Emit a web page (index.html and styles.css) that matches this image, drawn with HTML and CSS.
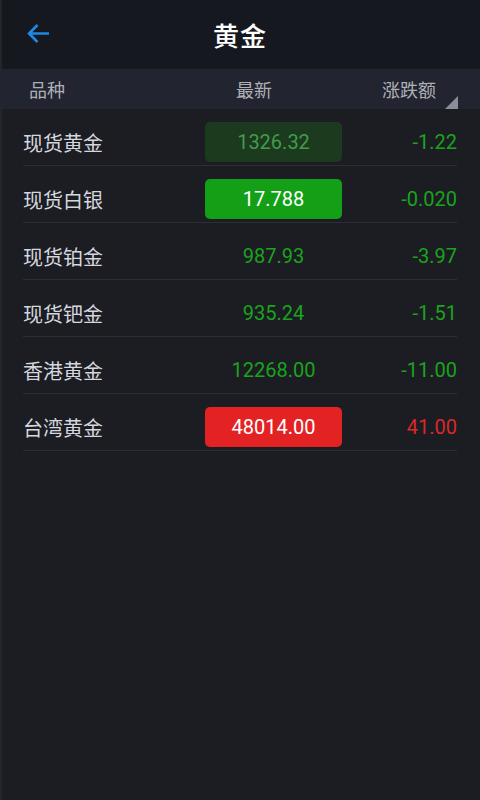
FILE: index.html
```html
<!DOCTYPE html>
<html lang="zh-CN">
<head>
<meta charset="utf-8">
<title>黄金</title>
<link rel="stylesheet" href="styles.css">
</head>
<body>
<div class="app">
  <header class="topbar">
    <svg class="back" width="26" height="26" viewBox="0 0 26 26" aria-hidden="true">
      <path d="M3 11.5 H23 M11.5 3 L3 11.5 L11.5 20" fill="none" stroke="#1e88e5" stroke-width="2.6" stroke-linecap="butt" stroke-linejoin="miter"/>
    </svg>
    <h1 class="title">黄金</h1>
  </header>
  <div class="colhead">
    <span class="ch-name">品种</span>
    <span class="ch-price">最新</span>
    <span class="ch-change">涨跌额</span>
    <span class="corner"></span>
  </div>
  <ul class="list">
    <li class="row"><span class="name">现货黄金</span><span class="price dim">1326.32</span><span class="chg down">-1.22</span></li>
    <li class="row"><span class="name">现货白银</span><span class="price boxgreen">17.788</span><span class="chg down">-0.020</span></li>
    <li class="row"><span class="name">现货铂金</span><span class="price down">987.93</span><span class="chg down">-3.97</span></li>
    <li class="row"><span class="name">现货钯金</span><span class="price down">935.24</span><span class="chg down">-1.51</span></li>
    <li class="row"><span class="name">香港黄金</span><span class="price down">12268.00</span><span class="chg down">-11.00</span></li>
    <li class="row"><span class="name">台湾黄金</span><span class="price boxred">48014.00</span><span class="chg up">41.00</span></li>
  </ul>
</div>
</body>
</html>
```
FILE: styles.css
```css
html, body {
  margin: 0;
  padding: 0;
  background: #1c1d23;
}
.app {
  width: 480px;
  height: 800px;
  background: #1c1d23;
  border-left: 2px solid #25262c;
  box-sizing: border-box;
  font-family: Roboto, "Noto Sans CJK SC", sans-serif;
  overflow: hidden;
}
.topbar {
  height: 69px;
  background: #161820;
  position: relative;
  display: flex;
  align-items: center;
  justify-content: center;
}
.back {
  position: absolute;
  left: 24px;
  top: 22px;
}
.title {
  margin: 0 0 0 -2px;
  color: #ffffff;
  font-size: 26px;
  font-weight: 500;
  font-family: "Noto Sans CJK SC", sans-serif;
  letter-spacing: 1px;
}
.colhead {
  height: 40px;
  background: #22242f;
  display: flex;
  align-items: center;
  position: relative;
  color: #aeb0b9;
  font-size: 18px;
  font-family: "Noto Sans CJK SC", sans-serif;
  padding-left: 27px;
}
.ch-name {
  width: 207px;
}
.ch-price {
  width: 36px;
}
.ch-change {
  margin-left: 110px;
}
.corner {
  position: absolute;
  right: 22px;
  bottom: 0;
  width: 0;
  height: 0;
  border-style: solid;
  border-width: 0 0 13px 13px;
  border-color: transparent transparent #8a8c9c transparent;
}
.list {
  list-style: none;
  margin: 0;
  padding: 0 23px 0 21px;
}
.row {
  display: flex;
  align-items: center;
  padding: 13px 0 3px 0;
  height: 40px;
  border-bottom: 1px solid #2c2e35;
}
.name {
  width: 182px;
  color: #d5d7de;
  font-size: 20px;
  font-family: "Noto Sans CJK SC", sans-serif;
}
.price {
  width: 137px;
  height: 40px;
  border-radius: 5px;
  display: flex;
  align-items: center;
  justify-content: center;
  font-size: 20px;
}
.chg {
  flex: 1;
  text-align: right;
  font-size: 20px;
}
.down { color: #1aa31d; }
.up { color: #d9282a; }
.dim {
  background: #1b3a1e;
  color: #449a4c;
}
.boxgreen {
  background: #13a016;
  color: #ffffff;
}
.boxred {
  background: #e32323;
  color: #ffffff;
}
```
